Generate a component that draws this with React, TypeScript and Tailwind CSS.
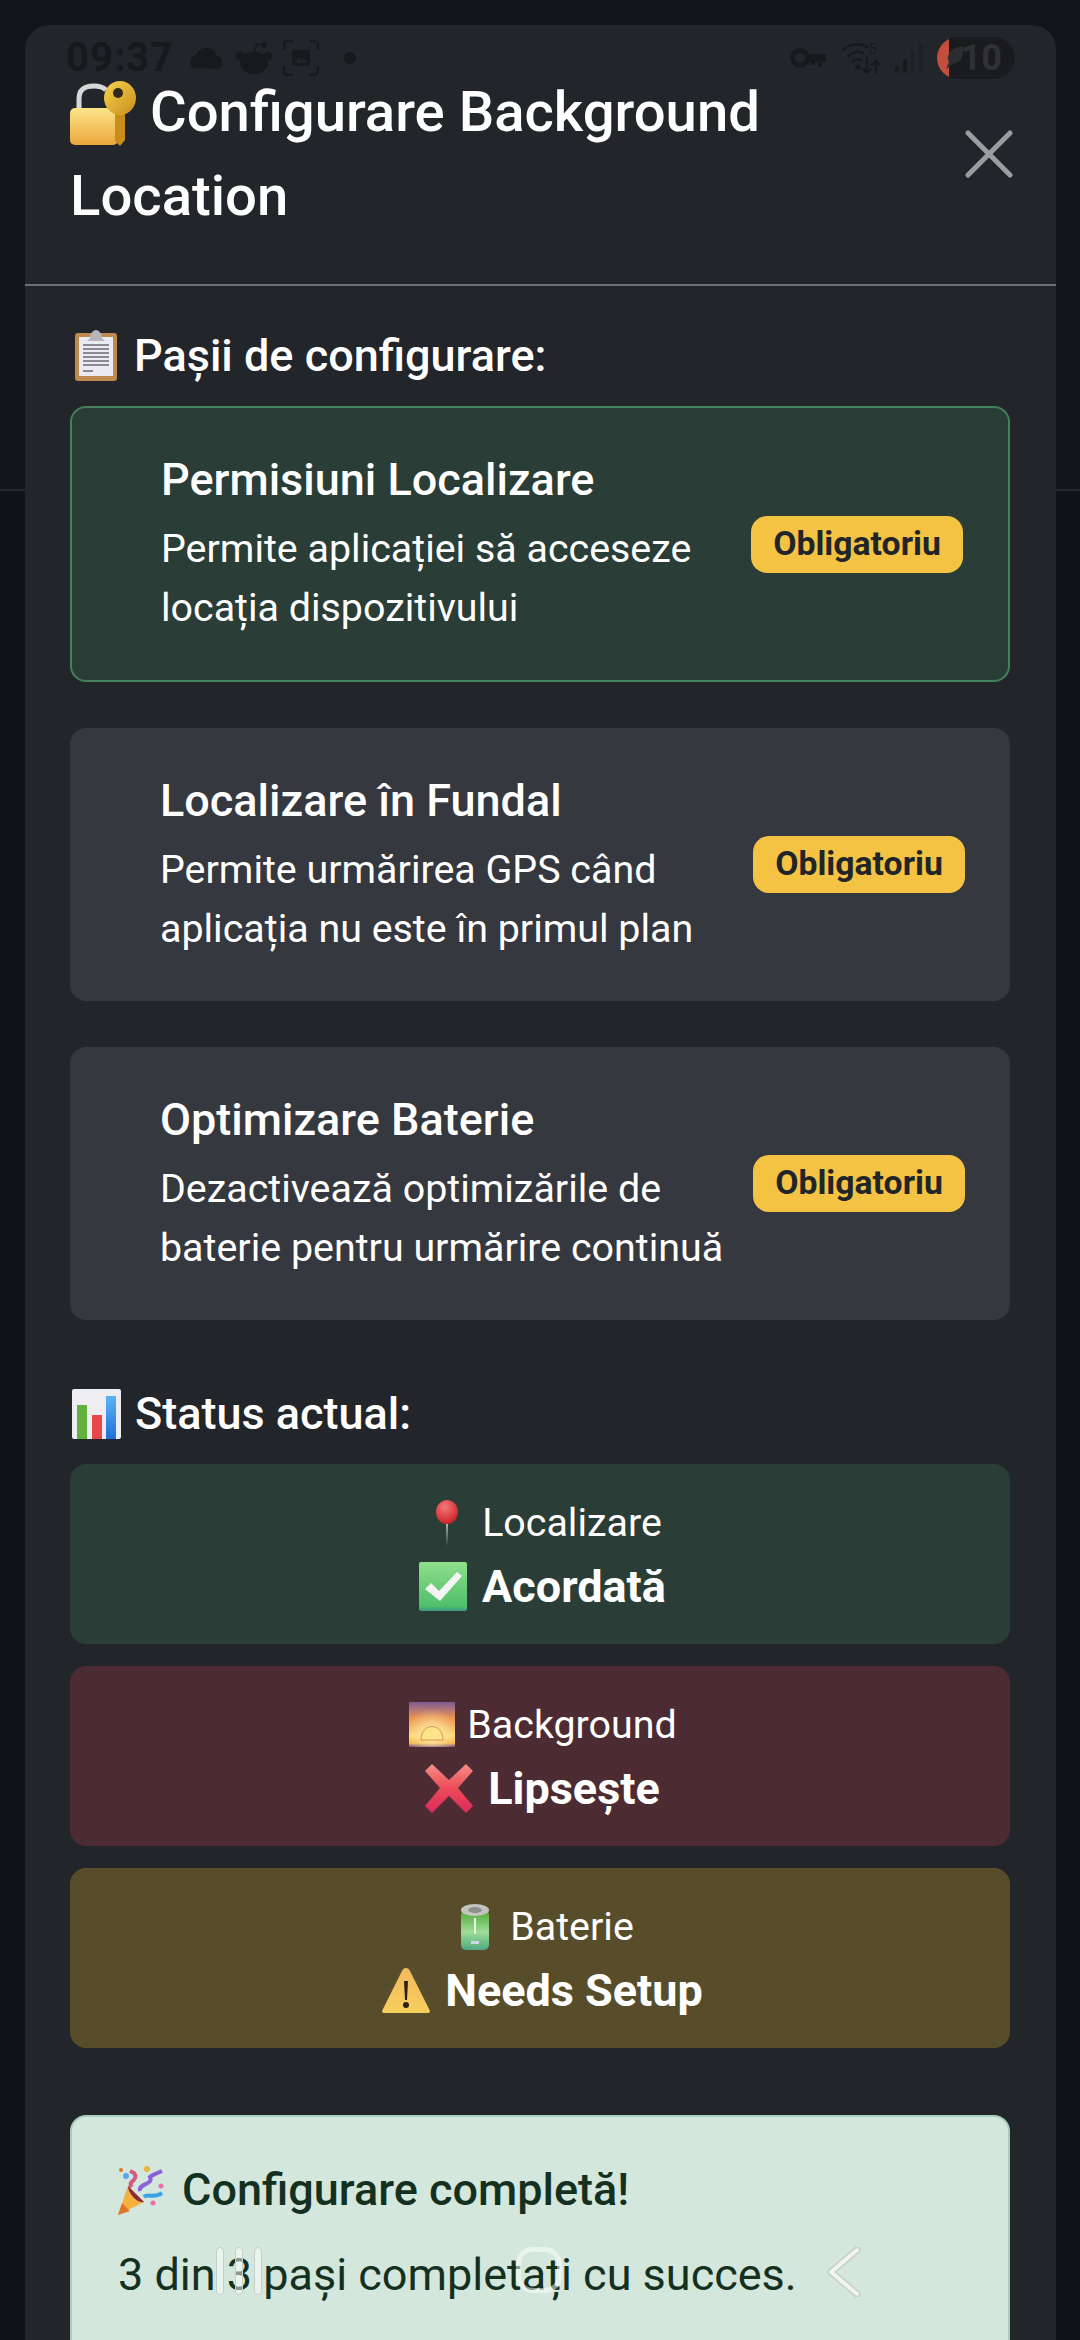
import React from 'react';

const LockKey = () => (
  <svg width="66" height="65" viewBox="0 0 66 65" className="inline-block align-[-15px]">
    <defs>
      <linearGradient id="lockBody" x1="0" y1="0" x2="0" y2="1">
        <stop offset="0" stopColor="#fde58a" />
        <stop offset="1" stopColor="#eba63a" />
      </linearGradient>
      <linearGradient id="keyBody" x1="0" y1="0" x2="1" y2="1">
        <stop offset="0" stopColor="#f7d34f" />
        <stop offset="1" stopColor="#c98d1c" />
      </linearGradient>
    </defs>
    <path d="M9 30V18C9 8 15 5 24 5c5 0 9 1 12 4" fill="none" stroke="#d8d8d8" strokeWidth="5" />
    <rect x="0" y="27" width="48" height="37" rx="5" fill="url(#lockBody)" />
    <path d="M45 28h10v31l-5 6-5-5z" fill="#c98d1c" />
    <ellipse cx="50" cy="17" rx="16" ry="17" fill="url(#keyBody)" />
    <circle cx="48" cy="12" r="5" fill="#33291a" />
  </svg>
);

const Clipboard = () => (
  <svg width="42" height="51" viewBox="0 0 42 51" className="inline-block">
    <rect x="0" y="3" width="42" height="48" rx="3" fill="#c08a4e" />
    <rect x="4" y="7" width="34" height="39" fill="#ecebf2" />
    <path d="M15 8c0-4 3-8 6-8s6 4 6 8l3 3H12z" fill="#b5b5bd" />
    <g fill="#8a8a92">
      <rect x="8" y="14" width="26" height="2" />
      <rect x="8" y="18" width="26" height="2" />
      <rect x="8" y="22" width="26" height="2" />
      <rect x="8" y="26" width="26" height="2" />
      <rect x="8" y="30" width="26" height="2" />
      <rect x="8" y="34" width="26" height="2" />
      <rect x="8" y="40" width="10" height="2" />
    </g>
  </svg>
);

const BarChart = () => (
  <svg width="49" height="50" viewBox="0 0 49 50" className="inline-block">
    <defs>
      <linearGradient id="barBlue" x1="0" y1="0" x2="0" y2="1">
        <stop offset="0" stopColor="#5cb4f5" />
        <stop offset="1" stopColor="#1f6fd6" />
      </linearGradient>
    </defs>
    <rect x="0" y="0" width="49" height="50" rx="2" fill="#eeeef2" />
    <rect x="5" y="16" width="10" height="34" fill="#62b13f" />
    <rect x="20" y="26" width="10" height="24" fill="#e8474a" />
    <rect x="34" y="7" width="10" height="43" fill="url(#barBlue)" />
  </svg>
);

const Pin = () => (
  <svg width="24" height="46" viewBox="0 0 24 46">
    <defs>
      <radialGradient id="pinHead" cx="0.4" cy="0.3" r="0.8">
        <stop offset="0" stopColor="#f27a7a" />
        <stop offset="1" stopColor="#c8161f" />
      </radialGradient>
    </defs>
    <path d="M11 20h2l-1 26z" fill="#c9c9cf" />
    <ellipse cx="12" cy="12" rx="11" ry="12" fill="url(#pinHead)" />
  </svg>
);

const CheckBox = () => (
  <svg width="48" height="49" viewBox="0 0 48 49">
    <defs>
      <linearGradient id="checkBg" x1="0" y1="0" x2="0" y2="1">
        <stop offset="0" stopColor="#8fdf8c" />
        <stop offset="0.9" stopColor="#4fbf6b" />
        <stop offset="1" stopColor="#3a9a80" />
      </linearGradient>
    </defs>
    <rect width="48" height="49" rx="2" fill="url(#checkBg)" />
    <path d="M6 27l6-6 8 8L38 10l5 4-22 25z" fill="#f4f4f4" />
  </svg>
);

const Sunrise = () => (
  <svg width="46" height="45" viewBox="0 0 46 45">
    <defs>
      <linearGradient id="sunSky" x1="0" y1="0" x2="0" y2="1">
        <stop offset="0" stopColor="#7b5a96" />
        <stop offset="0.35" stopColor="#ec9150" />
        <stop offset="0.75" stopColor="#fbd672" />
        <stop offset="0.92" stopColor="#f3b34a" />
        <stop offset="1" stopColor="#6b4a86" />
      </linearGradient>
      <radialGradient id="sunGlow" cx="0.5" cy="0.7" r="0.55">
        <stop offset="0" stopColor="#fff3b8" stopOpacity="0.9" />
        <stop offset="1" stopColor="#fff3b8" stopOpacity="0" />
      </radialGradient>
    </defs>
    <rect width="46" height="45" fill="url(#sunSky)" />
    <rect width="46" height="45" fill="url(#sunGlow)" />
    <path d="M12 38c0-18 22-18 22 0z" fill="#fde48c" stroke="#d9944a" strokeWidth="1" />
  </svg>
);

const CrossMark = () => (
  <svg width="48" height="49" viewBox="0 0 48 49">
    <defs>
      <linearGradient id="crossRed" x1="0" y1="0" x2="0" y2="1">
        <stop offset="0" stopColor="#f58f85" />
        <stop offset="0.5" stopColor="#ec4a58" />
        <stop offset="1" stopColor="#dd2a5c" />
      </linearGradient>
    </defs>
    <path d="M7 0l17 16L41 0l7 7-15 17 15 18-7 7-17-17L7 49l-7-7 15-18L0 7z" fill="url(#crossRed)" />
  </svg>
);

const Battery = () => (
  <svg width="28" height="46" viewBox="0 0 28 46">
    <defs>
      <linearGradient id="battBody" x1="0" y1="0" x2="0" y2="1">
        <stop offset="0" stopColor="#4fa832" />
        <stop offset="0.55" stopColor="#9edc98" />
        <stop offset="1" stopColor="#4fa880" />
      </linearGradient>
    </defs>
    <rect y="6" width="28" height="40" rx="5" fill="url(#battBody)" />
    <ellipse cx="14" cy="6" rx="14" ry="6" fill="#c4c4c0" />
    <ellipse cx="14" cy="6" rx="7" ry="3" fill="#8f8f8a" />
    <rect x="13" y="14" width="2" height="16" fill="#e6f5e0" />
    <rect x="10" y="37" width="8" height="3" fill="#cfd8e8" />
  </svg>
);

const Warning = () => (
  <svg width="48" height="45" viewBox="0 0 48 45">
    <defs>
      <linearGradient id="warnBg" x1="0" y1="0" x2="0" y2="1">
        <stop offset="0" stopColor="#f3b95f" />
        <stop offset="1" stopColor="#f7cf5d" />
      </linearGradient>
    </defs>
    <path d="M24 0c2 0 3 1 4 3l20 40-1 2H1l-1-2L20 3c1-2 2-3 4-3z" fill="url(#warnBg)" />
    <path d="M22 13h4l-1 19h-2z" fill="#2a2118" />
    <circle cx="24" cy="37" r="3" fill="#2a2118" />
  </svg>
);

const Party = () => (
  <svg width="48" height="50" viewBox="0 0 48 50" className="inline-block">
    <path d="M0 50l10-29 16 16z" fill="#f3b23f" />
    <path d="M0 50l4-12 8 8z" fill="#e0762a" />
    <path d="M10 21l16 16c-6 2-16-8-16-16z" fill="#8c2a3a" />
    <path d="M14 22c-6-6 8-6 2-14l-4-2" fill="none" stroke="#d9577f" strokeWidth="4" />
    <path d="M22 26c-2-8 14-6 10-14 3-3 8-4 12-6" fill="none" stroke="#8a62d8" strokeWidth="4" />
    <path d="M26 32c4-4 10 2 18-4" fill="none" stroke="#3ba2e8" strokeWidth="4" />
    <circle cx="8" cy="11" r="3" fill="#58a8ee" />
    <circle cx="29" cy="4" r="3" fill="#f0b43c" />
    <circle cx="43" cy="21" r="2.5" fill="#ec6fa6" />
    <circle cx="35" cy="38" r="2.5" fill="#ec6fa6" />
    <circle cx="3" cy="5" r="2" fill="#e0762a" />
  </svg>
);

const StatusBar = () => (
  <div className="absolute left-[66px] right-[65px] top-[37px] h-[42px] flex items-center text-[#17191c]">
    <span className="w-[104px] text-[40px] font-bold leading-none tracking-[1px]">09:37</span>
    <svg width="36" height="22" viewBox="0 0 36 22" fill="currentColor" className="ml-[19px]">
      <path d="M8 21a6 6 0 0 1-2-12C8 4 12 1 17 1c6 0 10 4 11 8a6.500 6.500 0 0 1 1 12.500z" />
    </svg>
    <svg width="36" height="32" viewBox="0 0 36 32" fill="currentColor" className="ml-[11px]">
      <ellipse cx="18" cy="21" rx="14" ry="11" />
      <circle cx="4" cy="14" r="4" />
      <circle cx="32" cy="14" r="4" />
      <path d="M18 11l3-9 6 1" fill="none" stroke="currentColor" strokeWidth="1.500" />
      <circle cx="28" cy="3" r="3" />
    </svg>
    <svg width="36" height="36" viewBox="0 0 36 36" fill="none" stroke="currentColor" strokeWidth="2.500" className="ml-[11px]">
      <path d="M10 1H5a4 4 0 0 0-4 4v5M26 1h5a4 4 0 0 1 4 4v5M10 35H5a4 4 0 0 1-4-4v-5M26 35h5a4 4 0 0 0 4-4v-5" />
      <rect x="9" y="10" width="18" height="16" rx="2" fill="currentColor" stroke="none" />
      <path d="M11 23l5-6 3 3 2-2 4 5z" fill="#212529" stroke="none" />
    </svg>
    <span className="ml-[25px] w-[12px] h-[12px] rounded-full bg-current" />
    <span className="flex-1" />
    <svg width="37" height="22" viewBox="0 0 37 22" fill="none" className="mr-[15px]">
      <circle cx="10" cy="11" r="7.500" stroke="currentColor" strokeWidth="4.500" />
      <path d="M17 7h19v8h-4v5h-4v-5h-3v3h-4v-3h-4z" fill="currentColor" />
    </svg>
    <svg width="38" height="34" viewBox="0 0 38 34" fill="none" stroke="currentColor" strokeWidth="2.500" strokeLinecap="round" className="mr-[15px]">
      <path d="M1 9c7-6 17-8 24-3M6 15c5-4 11-5 15-3M11 20c3-2 6-2 8-1" />
      <circle cx="16" cy="26" r="1.500" fill="currentColor" />
      <path d="M25 17v15M21 28l4 4 4-4M34 32V20M30 24l4-4 4 4" strokeWidth="2" />
      <text x="27" y="13" fontSize="14" fill="currentColor" stroke="none">5</text>
    </svg>
    <svg width="28" height="30" viewBox="0 0 28 30" fill="currentColor" className="mr-[14px]">
      <rect x="0" y="23" width="4" height="7" rx="2" />
      <rect x="8" y="16" width="4" height="14" rx="2" />
      <rect x="16" y="8" width="3" height="22" rx="1.500" opacity="0.45" />
      <rect x="24" y="0" width="3" height="30" rx="1.500" opacity="0.45" />
    </svg>
    <div className="relative w-[78px] h-[42px] rounded-full bg-[#1a1b1e] overflow-hidden flex items-center justify-end pr-[13px]">
      <span className="absolute left-0 top-0 bottom-0 w-[12px] bg-[#c24f3c]" />
      <svg width="22" height="26" viewBox="0 0 22 26" className="absolute left-[6px] top-[8px]" fill="#2b2d31">
        <path d="M20 1c1 10-2 17-10 18l-7 5 3-7C2 9 10 2 20 1z" />
      </svg>
      <span className="text-[36px] font-bold leading-none text-[#2f3135]">10</span>
    </div>
  </div>
);

const NavBar = () => (
  <div className="absolute inset-x-0 top-[2247px] h-[48px]">
    <div className="absolute left-[216px] top-0 flex gap-[11px]">
      <span className="w-[8px] h-[48px] rounded-full bg-white/50 border border-[#c4d0c9]" />
      <span className="w-[8px] h-[48px] rounded-full bg-white/50 border border-[#c4d0c9]" />
      <span className="w-[8px] h-[48px] rounded-full bg-white/50 border border-[#c4d0c9]" />
    </div>
    <span className="absolute left-[516px] top-0 w-[46px] h-[46px] rounded-[17px] border-[5px] border-white/50" />
    <svg width="36" height="50" viewBox="0 0 36 50" fill="none" className="absolute left-[826px] top-0">
      <path d="M31 3L5 25l26 22" stroke="#c4d0c9" strokeWidth="7" strokeLinecap="round" strokeLinejoin="round" />
      <path d="M31 3L5 25l26 22" stroke="#f1f4f2" strokeWidth="4" strokeLinecap="round" strokeLinejoin="round" />
    </svg>
  </div>
);

interface StepProps {
  title: string;
  lines: string[];
  done?: boolean;
}

const Step: React.FC<StepProps> = ({ title, lines, done }) => (
  <div
    className={
      done
        ? 'h-[276px] rounded-[16px] border-2 border-[#43805c] bg-[#2a3d36] pl-[89px] pr-[45px] flex items-center justify-between'
        : 'h-[273px] rounded-[16px] bg-[#35383e] pl-[90px] pr-[45px] flex items-center justify-between'
    }
  >
    <div className="text-white pt-[2px]">
      <div className="text-[45px] font-medium leading-[54px] mb-[12px]">{title}</div>
      {lines.map((l) => (
        <div key={l} className="text-[39.400px] leading-[59px] whitespace-nowrap">{l}</div>
      ))}
    </div>
    <span className="h-[57px] w-[212px] rounded-[16px] bg-[#f4c343] text-[#212529] text-[33.750px] font-bold flex items-center justify-center">
      Obligatoriu
    </span>
  </div>
);

interface StatProps {
  bg: string;
  icon: React.ReactNode;
  label: string;
  statusIcon: React.ReactNode;
  status: string;
}

const Stat: React.FC<StatProps> = ({ bg, icon, label, statusIcon, status }) => (
  <div className={`${bg} h-[180px] rounded-[16px] flex flex-col items-center justify-center pt-[5px] text-white`}>
    <div className="text-[39.400px] leading-[59px] flex items-center gap-[6px] whitespace-nowrap">
      <span className="w-[58px] flex justify-center">{icon}</span>
      <span>{label}</span>
    </div>
    <div className="mt-[1px] text-[45px] font-bold leading-[67px] flex items-center gap-[10px] whitespace-nowrap">
      <span className="w-[58px] flex justify-center">{statusIcon}</span>
      <span>{status}</span>
    </div>
  </div>
);

export default function App() {
  return (
    <div className="relative w-[1080px] h-[2340px] overflow-hidden bg-[#0f1218] font-['Roboto',sans-serif]">
      {/* page behind the dialog */}
      <div className="absolute inset-x-0 top-0 h-[491px] bg-[#11141b] border-b-2 border-[#262a30]" />

      <div className="relative ml-[25px] mr-[24px] mt-[25px] h-[2400px] rounded-t-[24px] bg-[#22252a]">
        <div className="relative h-[261px] pl-[45px] pr-[140px] pt-[45px] border-b-2 border-[#6c7075]">
          <h1 className="text-[56.250px] font-medium leading-[84px] text-white">
            <LockKey /> Configurare Background Location
          </h1>
          <svg width="48" height="48" viewBox="0 0 48 48" className="absolute right-[43px] top-[105px]" stroke="#9b9d9f" strokeWidth="5" strokeLinecap="round">
            <path d="M3 3l42 42M45 3L3 45" />
          </svg>
        </div>

        <div className="pl-[45px] pr-[46px] pt-[36px]">
          <h2 className="text-[45px] font-medium leading-[67px] text-white mb-[17px] flex items-center gap-[17px] pl-[5px]">
            <Clipboard />
            <span>Pașii de configurare:</span>
          </h2>
          <div className="flex flex-col gap-[46px]">
            <Step done title="Permisiuni Localizare" lines={['Permite aplicației să acceseze', 'locația dispozitivului']} />
            <Step title="Localizare în Fundal" lines={['Permite urmărirea GPS când', 'aplicația nu este în primul plan']} />
            <Step title="Optimizare Baterie" lines={['Dezactivează optimizările de', 'baterie pentru urmărire continuă']} />
          </div>

          <h2 className="mt-[60px] text-[45px] font-medium leading-[67px] text-white mb-[17px] flex items-center gap-[14px] pl-[2px]">
            <BarChart />
            <span>Status actual:</span>
          </h2>
          <div className="flex flex-col gap-[22px]">
            <Stat bg="bg-[#2a3d36]" icon={<Pin />} label="Localizare" statusIcon={<CheckBox />} status="Acordată" />
            <Stat bg="bg-[#4d2b32]" icon={<Sunrise />} label="Background" statusIcon={<CrossMark />} status="Lipsește" />
            <Stat bg="bg-[#584d2a]" icon={<Battery />} label="Baterie" statusIcon={<Warning />} status="Needs Setup" />
          </div>

          <div className="mt-[67px] h-[400px] rounded-[16px] border-2 border-[#a9cdbb] bg-[#d4e7dd] px-[46px] pt-[39px] text-[#14301f]">
            <div className="text-[45px] font-medium leading-[67px] flex items-center gap-[16px]">
              <Party />
              <span>Configurare completă!</span>
            </div>
            <p className="mt-[18px] text-[45px] leading-[67px]">3 din 3 pași completați cu succes.</p>
          </div>
        </div>
      </div>

      <StatusBar />
      <NavBar />
    </div>
  );
}
